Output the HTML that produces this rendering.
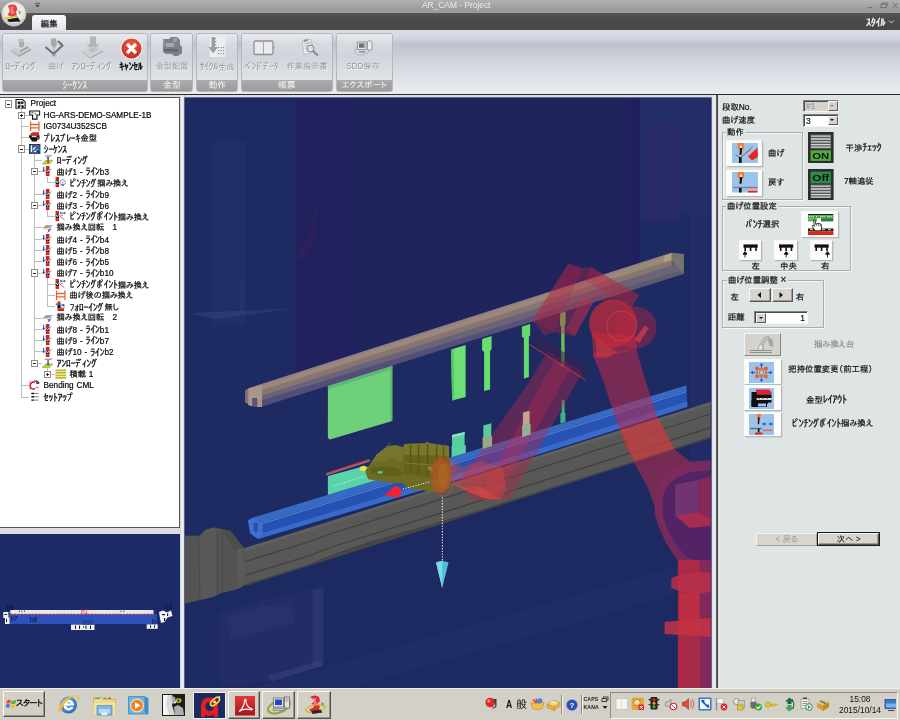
<!DOCTYPE html>
<html lang="ja">
<head>
<meta charset="utf-8">
<title>AR_CAM - Project</title>
<style>
html,body{margin:0;padding:0;}
body{width:900px;height:720px;overflow:hidden;position:relative;will-change:transform;background:#dcdee4;font-family:"Liberation Sans","IPAPGothic","IPAGothic",sans-serif;font-size:8.2px;color:#000;}
.abs{position:absolute;}
.hk{font-size:1.25em;letter-spacing:-0.05em;position:relative;top:.04em;margin-right:.04em;}
.dk{margin-left:-0.15em;margin-right:-0.1em;}
#titlebar{left:0;top:0;width:900px;height:14px;background:linear-gradient(#b2b2b4,#a2a2a2 45%,#9a9a9a 80%,#a0a0a0);}
#title{left:422px;top:0;width:68px;height:12px;line-height:11px;font-size:8.4px;color:#ececec;white-space:nowrap;text-align:center;}
#menubar{left:0;top:13px;width:900px;height:17.5px;background:linear-gradient(#555,#4b4b4b 30%,#484848);}
#ribbon{left:0;top:30px;width:900px;height:64px;background:linear-gradient(#dadce6 0px,#d6d8e2 6px,#cacdd8 11px,#bec2ce 13.500px,#c9cdd7 24px,#dadee4 42px,#e8ecec 62px);}
#ribline{left:0;top:93.700px;width:900px;height:1.700px;background:#2c2c2c;}
#midstrip{left:0;top:95.400px;width:900px;height:593.600px;background:#dcdce2;}
#gapL{left:180px;top:95px;width:5.400px;height:594px;background:linear-gradient(90deg,#cfcbd6,#e8e6ee 30%,#f2f2f6 55%,#c4c8d4 90%,#8890a8);}
#gapR{left:711px;top:95px;width:5px;height:594px;background:linear-gradient(90deg,#c8ccd8,#eaeaf0 40%,#e4e4ea);}
.grp{position:absolute;top:33px;height:58.5px;border:1px solid #b4b6bc;border-radius:2.5px;box-sizing:border-box;background:linear-gradient(rgba(235,237,240,.75),rgba(214,216,222,.55) 40%,rgba(226,228,232,.7));overflow:hidden;}
.grp .lab{position:absolute;left:0;right:0;bottom:0;height:10.5px;background:linear-gradient(#acacae,#9b9b9d);color:#f6f6f6;font-size:8.8px;line-height:10.5px;text-align:center;white-space:nowrap;}
.rb{position:absolute;color:#97979b;text-shadow:.5px .6px 0 rgba(255,255,255,.75);font-size:8.2px;white-space:nowrap;text-align:center;line-height:11px;}
/* tree */
#tree{left:0;top:97px;width:180px;height:431px;background:#fff;border-top:1px solid #555;border-right:1.2px solid #55555a;border-bottom:1.2px solid #555;box-sizing:border-box;overflow:hidden;}
.tr{-webkit-text-stroke:.22px #1a1a1a;position:absolute;left:0;height:11.27px;line-height:11.27px;white-space:nowrap;font-size:8.2px;color:#000;word-spacing:0.6px;}
.tr svg{position:absolute;top:0;}
.tl{position:absolute;background:#bcbcbc;}
.xb{position:absolute;width:5.4px;height:5.4px;border:0.8px solid #8e8e8e;background:#fff;}
.xb i{position:absolute;left:1px;top:2.3px;width:3.4px;height:.9px;background:#222;}
.xb b{position:absolute;left:2.25px;top:1px;width:.9px;height:3.4px;background:#222;}
</style>
</head>
<body>
<div id="titlebar" class="abs"></div>
<div id="title" class="abs">AR_CAM - Project</div>
<div id="menubar" class="abs"></div>
<div id="ribbon" class="abs"></div>
<div id="ribline" class="abs"></div>
<div id="midstrip" class="abs"></div>
<div id="gapL" class="abs"></div><div id="gapR" class="abs"></div>

<!-- orb -->
<svg class="abs" style="left:0;top:0" width="30" height="30" viewBox="0 0 30 30">
<defs><radialGradient id="og" cx="50%" cy="40%" r="60%"><stop offset="0" stop-color="#ffffff"/><stop offset="0.7" stop-color="#e6e6e2"/><stop offset="1" stop-color="#b8b8b4"/></radialGradient></defs>
<circle cx="13.8" cy="13.8" r="12.6" fill="#8c8c8c"/>
<circle cx="13.8" cy="13.8" r="12" fill="url(#og)" stroke="#d4d4d0" stroke-width="0.8"/>
<path d="M8 6 Q12 3.5 16 5.5 L17.5 9 L16 12 L17 15 L12 17 L7.5 15 L10 11 Z" fill="#e8282c" opacity=".9"/>
<path d="M10.5 7 L14 6.5 L13 10 L15 13 L11 14.5 Z" fill="#f4a0a0" opacity=".7"/>
<path d="M4.5 17.5 L17 15.5 L18 17 L4.5 19 Z" fill="#d8c428"/>
<path d="M7 19.5 L18 17.5 L20.5 21.5 L9 22 Z" fill="#181818"/>
<path d="M18 10 L21 12 L19.5 15 Z" fill="#38a860" opacity=".8"/>
</svg>
<!-- quick access chevron -->
<svg class="abs" style="left:33px;top:1px" width="9" height="8" viewBox="0 0 9 8"><path d="M2 2.2h5" stroke="#555" stroke-width="0.9"/><path d="M2 3.8h5L4.5 6.4z" fill="#4a4a4a"/></svg>
<!-- tab -->
<div class="abs" style="left:32px;top:14.6px;width:34px;height:16.4px;border-radius:3px 3px 0 0;background:linear-gradient(#fafafa,#eceef2 50%,#dfe1e8);"></div>
<div class="abs" style="left:32px;top:17.5px;width:34px;height:12px;line-height:12px;font-size:8.6px;font-weight:bold;color:#3a3a3a;text-align:center;">編集</div>
<div class="abs" style="left:866px;top:16px;width:20px;height:12px;line-height:12px;font-size:8.4px;color:#f0f0f0;white-space:nowrap;font-weight:bold;"><span class="hk">ｽﾀｲﾙ</span></div>
<svg class="abs" style="left:888px;top:19px" width="7" height="6" viewBox="0 0 7 6"><path d="M1 1.5L3.5 4L6 1.5" stroke="#d8d8d8" stroke-width="1" fill="none"/></svg>
<!-- window controls -->
<svg class="abs" style="left:864px;top:0" width="36" height="12" viewBox="0 0 36 12"><path d="M4.5 7.6h4" stroke="#6e6e6e" stroke-width="1"/><rect x="17" y="4.2" width="5.4" height="3.4" fill="none" stroke="#6e6e6e" stroke-width="1"/><path d="M18.5 4V2.8h5.2v3" fill="none" stroke="#6e6e6e" stroke-width=".8"/><path d="M29 3l4.6 4.8M33.6 3L29 7.8" stroke="#6e6e6e" stroke-width="1"/></svg>

<!-- group 1 -->
<div class="grp" style="left:1.6px;width:146.4px;"><div class="lab"><span class="hk">ｼｰｹﾝｽ</span></div></div>
<div class="grp" style="left:150.4px;width:43px;"><div class="lab">金型</div></div>
<div class="grp" style="left:196px;width:42.4px;"><div class="lab">動作</div></div>
<div class="grp" style="left:240.8px;width:91.8px;"><div class="lab">帳票</div></div>
<div class="grp" style="left:335.6px;width:57px;"><div class="lab">エクスポート</div></div>

<div class="rb" style="left:1px;top:60.5px;width:40px;"><span class="hk">ﾛｰﾃ<span class="dk">ﾞ</span>ｨﾝｸ<span class="dk">ﾞ</span></span></div>
<div class="rb" style="left:36px;top:60.5px;width:40px;">曲げ</div>
<div class="rb" style="left:67px;top:60.5px;width:50px;"><span class="hk">ｱﾝﾛｰﾃ<span class="dk">ﾞ</span>ｨﾝｸ<span class="dk">ﾞ</span></span></div>
<div class="rb" style="left:111px;top:60.5px;width:40px;color:#111;font-weight:bold;text-shadow:none;"><span class="hk">ｷｬﾝｾﾙ</span></div>
<div class="rb" style="left:151px;top:60.5px;width:42px;">金型配置</div>
<div class="rb" style="left:196px;top:60.5px;width:42px;"><span class="hk">ｻｲｸﾙ</span>生成</div>
<div class="rb" style="left:244.500px;top:60.5px;text-align:left;"><span class="hk">ﾍ<span class="dk">ﾞ</span>ﾝﾄ<span class="dk">ﾞ</span>ﾃ<span class="dk">ﾞ</span>ｰﾀ</span></div>
<div class="rb" style="left:286.500px;top:60.5px;text-align:left;">作業指示書</div>
<div class="rb" style="left:338px;top:60.5px;width:50px;">SDD保存</div>

<!-- icon: loading -->
<svg class="abs" style="left:10px;top:37px" width="23" height="22" viewBox="0 0 23 22">
<path d="M1 13 L13 7.5 L21 11.5 L9 18 Z" fill="#c9cacf"/><path d="M1 13 L9 18 V20 L1 15Z" fill="#b4b5ba"/><path d="M9 18 L21 11.5 V13.5 L9 20Z" fill="#a5a6ab"/>
<path d="M5 10.5 L13 6.5 L18 9 L10 13.5 Z" fill="#d5d6da"/><path d="M10 13.5 L18 9 V11 L10 15.5Z" fill="#9d9ea3"/>
<path d="M9 5 h5 v4 l-2.5 2 l-2.5 -2z" fill="#a9aaae"/><path d="M8 2 h6 v3 h-6z" fill="#c1c2c6"/>
</svg>
<!-- icon: bend -->
<svg class="abs" style="left:44px;top:37px" width="22" height="22" viewBox="0 0 22 22">
<path d="M7 1.5 h5 l1 6 l-3 4 l-3 -4z" fill="#a7a8ac"/><path d="M9 10 h1.4 v8 h-1.4z" fill="#b6b7bb"/>
<path d="M1.5 10 L9.6 17 L18.5 8.5 L14 4" stroke="#6e6f78" stroke-width="2" fill="none" stroke-linejoin="miter"/>
<path d="M7 17.5 h6 l-3 2.5z" fill="#a0a1a6"/>
</svg>
<!-- icon: unloading -->
<svg class="abs" style="left:82px;top:36px" width="22" height="23" viewBox="0 0 22 23">
<path d="M8 0.5 h6 v8 h3.5 l-6.5 6 l-6.5 -6 h3.5z" fill="#b3b4b9"/>
<path d="M0.5 15.5 L11 10.5 L21 14.5 L8 21.5 Z" fill="#cfd0d4"/><path d="M0.5 15.5 L8 21.5 V22.5 L0.5 16.8Z" fill="#b1b2b7"/><path d="M8 21.500 L21 14.5 V15.8 L8 22.8Z" fill="#a6a7ab"/>
<path d="M6 14 L11 11.5 L16 13.5 L10.5 16.5Z" fill="#bebfc4"/>
</svg>
<!-- icon: cancel -->
<svg class="abs" style="left:120px;top:36.500px" width="23" height="23" viewBox="0 0 23 23">
<defs><radialGradient id="cg" cx="50%" cy="30%" r="75%"><stop offset="0" stop-color="#ee5a44"/><stop offset="1" stop-color="#c42a20"/></radialGradient></defs>
<circle cx="11.5" cy="11.5" r="11" fill="#f4ecea"/><circle cx="11.5" cy="11.500" r="10" fill="url(#cg)"/>
<path d="M7 7 L16 16 M16 7 L7 16" stroke="#fff" stroke-width="3.2"/>
</svg>
<!-- icon: machine -->
<svg class="abs" style="left:161px;top:36px" width="23" height="22" viewBox="0 0 23 22">
<path d="M2 6 L4 3 h4 l2 -2 h6 l3 3 v5 l2 2 v6 l-4 3 h-4 l-2 -2 h-6 l-3 -2z" fill="#7d8088"/>
<path d="M5 7 h8 v4 h-8z" fill="#a5a8ae"/><path d="M3 13 h14 v2.500 h-14z" fill="#63666e"/><path d="M12 2 h4 v4 h-4z" fill="#9c9fa6"/><path d="M2 3 h2 v7 h-2z" fill="#8d9097"/>
</svg>
<!-- icon: cycle -->
<svg class="abs" style="left:207px;top:36px" width="20" height="22" viewBox="0 0 20 22">
<rect x="3" y="0.500" width="15.500" height="20.500" fill="#eceef0"/>
<path d="M4.500 1 h3.500 v10 h3 l-4.800 6.500 l-4.700 -6.500 h3z" fill="#9b9da3"/>
<g fill="#8b8d93"><rect x="8" y="2" width="1.200" height="1.200"/><rect x="8" y="5" width="1.200" height="1.200"/><rect x="8" y="8" width="1.200" height="1.200"/><rect x="11" y="11" width="1.200" height="1.200"/><rect x="13.500" y="11" width="1.200" height="1.200"/><rect x="16" y="11" width="1.200" height="1.200"/><rect x="11" y="14" width="1.200" height="1.200"/><rect x="13.500" y="14" width="1.200" height="1.200"/><rect x="16" y="14" width="1.200" height="1.200"/><rect x="11" y="17" width="1.200" height="1.200"/><rect x="13.500" y="17" width="1.200" height="1.200"/><rect x="16" y="17" width="1.200" height="1.200"/></g>
</svg>
<!-- icon: book -->
<svg class="abs" style="left:253px;top:39.500px" width="23" height="16" viewBox="0 0 23 16">
<rect x="1" y="1" width="19" height="13.500" rx="1.500" fill="#e9ebee" stroke="#8f9197" stroke-width="1.300"/><path d="M10.500 1.500v12.500" stroke="#a4a6ab" stroke-width="1"/><path d="M20 6.500h1.500v2h-1.500" fill="#8f9197"/>
</svg>
<!-- icon: document + magnifier -->
<svg class="abs" style="left:299px;top:37.500px" width="22" height="20" viewBox="0 0 22 20">
<path d="M3 3 L12 1 L15 14 L5 16.500Z" fill="#e4e6ea" stroke="#b3b5bb" stroke-width=".7"/><path d="M4.500 2 L8.500 1 L9 3 L5 4Z" fill="#8e9096"/>
<path d="M5.500 6 l7 -1.600 M6 8.500 l7 -1.600 M6.600 11 l7 -1.600" stroke="#a9abb0" stroke-width=".9"/>
<circle cx="11.500" cy="10.500" r="3.300" fill="#dfe3e8" stroke="#8e9096" stroke-width="1.100" fill-opacity=".7"/><path d="M14 13 L19 17.500" stroke="#85878d" stroke-width="2"/>
</svg>
<!-- icon: SDD -->
<svg class="abs" style="left:354px;top:39px" width="20" height="18" viewBox="0 0 20 18">
<ellipse cx="9" cy="10" rx="8.500" ry="5.500" fill="none" stroke="#b8bac0" stroke-width="1.200" transform="rotate(-25 9 10)"/>
<rect x="3.500" y="3" width="8.500" height="7.500" fill="#e6e8ec" stroke="#8c8e94" stroke-width=".9"/><rect x="5" y="4.300" width="5.500" height="4.500" fill="#70727a"/>
<path d="M5 12 h6 v1.500 h-6z" fill="#8c8e94"/>
<rect x="13.500" y="2" width="4.500" height="9" rx=".8" fill="#eceef0" stroke="#8c8e94" stroke-width=".9"/>
</svg>

<!--TREE-->

<svg width="0" height="0" style="position:absolute">
<defs>
<symbol id="i-proj" viewBox="0 0 12 11"><path d="M1 .6h7l2.600 2.400v7.500H1z" fill="#fff" stroke="#111" stroke-width="1.100"/><path d="M3 3h2.500v2H3zM6.500 3h2v2h-2zM5 5v2M3.500 7h5M3 7.200h2v2H3zM7 7.200h2v2H7z" fill="#111" stroke="#111" stroke-width=".5"/></symbol>
<symbol id="i-part" viewBox="0 0 12 11"><path d="M.8 1h10.400v4.200H8.300V9.600H3.700V5.200H.8z" fill="#fff" stroke="#111" stroke-width="1.200"/><path d="M2.500 2.800h2M6 2.800l1 2" stroke="#111" stroke-width=".8"/></symbol>
<symbol id="i-hbar" viewBox="0 0 12 11"><path d="M1.600 .5v10M10.400 .5v10" stroke="#e0642c" stroke-width="1.300"/><path d="M1.600 3.600h8.800M1.600 7.200h8.800" stroke="#e0642c" stroke-width="1.500"/></symbol>
<symbol id="i-press" viewBox="0 0 12 11"><path d="M2 1.200l2-1h6.500v3H1z" fill="#e8201c"/><path d="M0 3.400h11v2.600H0z" fill="#111"/><path d="M3 4h5v1.300H3z" fill="#d8d8d8"/><path d="M1 6h10v1.600H9l-1 2.400H3L2 7.600H1z" fill="#111"/><path d="M8.500 6h2v2h-2z" fill="#e8201c"/></symbol>
<symbol id="i-seq" viewBox="0 0 12 11"><rect x=".3" y=".3" width="11.400" height="10.400" fill="#1c6cb0" stroke="#111" stroke-width=".8"/><path d="M2.500 1.500v7M4 6l4-4M4.500 9l5-3" stroke="#fff" stroke-width="1.200"/><path d="M6 1.500h3v2H6zM3 8.500h3v1.500H3z" fill="#e02820"/><path d="M8 6.500l2.500 2.500" stroke="#111" stroke-width="1.200"/></symbol>
<symbol id="i-load" viewBox="0 0 12 11"><path d="M2.500 1.600L4 .3h7.200L9.600 1.600z" fill="#9a9a9a"/><path d="M.3 9.500L3.600 5.500h7.800L8 9.500z" fill="#c8d020" stroke="#8a9010" stroke-width=".5"/><path d="M5.600 1.800h1.500v5.500H5.600z" fill="#2858c8"/><path d="M4.500 3.500L6.350 1.500 8.200 3.500z" fill="#2858c8"/><path d="M5.400 7h2v1.400h-2z" fill="#e02820"/></symbol>
<symbol id="i-unload" viewBox="0 0 12 11"><path d="M2 2L3.600 .4h7.800L9.800 2z" fill="#a0a0a0"/><path d="M.3 10L3.600 6.200h7.800L8 10z" fill="#c8d020" stroke="#8a9010" stroke-width=".5"/><path d="M5.600 2h1.500v5H5.600z" fill="#2858c8"/><path d="M4.500 6L6.350 8 8.200 6z" fill="#2858c8"/></symbol>
<symbol id="i-bend" viewBox="0 0 12 11"><path d="M1.700 .8v5" stroke="#2050c8" stroke-width="1.100"/><path d="M.2 4.200L1.700 6.600 3.200 4.200z" fill="#2050c8"/><path d="M4 0h3.800v3.600H4z" fill="#e8181c"/><path d="M4 3.600h3.800v4H4z" fill="#111"/><path d="M4 7.600h3.800v3.200H4z" fill="#e8181c"/><path d="M4.600 4.200l1.300 2.200 1.300-2.200" stroke="#fff" stroke-width=".9" fill="none"/><path d="M5.900 6.400L10 2.600" stroke="#8a8a8a" stroke-width=".9"/><path d="M2.400 3.200L5.900 6.400" stroke="#8a8a8a" stroke-width=".7"/></symbol>
<symbol id="i-pinch" viewBox="0 0 12 11"><path d="M.6 0h3.600v3.400H.6z" fill="#e8181c"/><path d="M.6 3.400h3.600v4.200H.6z" fill="#111"/><path d="M.6 7.600h3.600v3.200H.6z" fill="#e8181c"/><path d="M1.100 4l1.300 2.200L3.700 4" stroke="#fff" stroke-width=".9" fill="none"/><circle cx="8" cy="5.600" r="3" fill="#e8eef8" stroke="#88a4d8" stroke-width="1"/><path d="M6 8.500l3.500 .8-1-2z" fill="#2848b8"/><path d="M7 4.500l2 2" stroke="#e07070" stroke-width=".8"/></symbol>
<symbol id="i-pinpt" viewBox="0 0 12 11"><path d="M.6 0h3.600v3.400H.6z" fill="#e8181c"/><path d="M.6 3.400h3.600v4.200H.6z" fill="#111"/><path d="M.6 7.600h3.600v3.200H.6z" fill="#e8181c"/><path d="M1.100 4l1.300 2.200L3.700 4" stroke="#fff" stroke-width=".9" fill="none"/><path d="M5.200 2.200h5.600" stroke="#2858d0" stroke-width="1"/><path d="M5 2.200l1.600-1.400v2.800zM11.200 2.200L9.600 .8v2.800z" fill="#2858d0"/><path d="M4.600 5l5.400 4.400" stroke="#d86060" stroke-width="1"/><path d="M5 4.400l3.500 .3" stroke="#8a8a8a" stroke-width=".8"/></symbol>
<symbol id="i-follow" viewBox="0 0 12 11"><path d="M2.600 .6h3.200v3H2.600z" fill="#e8181c"/><path d="M2.600 3.600h3.200v4H2.600z" fill="#111"/><path d="M2.600 7.600h6.800v3H2.600z" fill="#e8181c"/><path d="M.4 3.400l2-1.600v3.200z" fill="#2858d0"/><path d="M6 4.600c2-1.500 3.800.5 3.500 3" stroke="#68a8c8" stroke-width="1.300" fill="none"/><path d="M7.800 2.600l3 1.800-3 .8z" fill="#2050c0"/><path d="M6.200 5.500l1.200 2" stroke="#40a060" stroke-width="1"/></symbol>
<symbol id="i-rot" viewBox="0 0 12 11"><path d="M.2 5.600L4.200 2h7.400L7.500 5.600z" fill="#a8a8a8"/><path d="M1.500 6.200l4-3.200M4 6.200l4-3.200" stroke="#e08050" stroke-width=".7"/><path d="M5.500 6.400l3.400 .4-1 2.400z" fill="#2858d0"/><path d="M6 9.800l2.500-2.800" stroke="#2858d0" stroke-width="1"/><path d="M9.500 4.500l-1.200 3" stroke="#6080d0" stroke-width=".9"/></symbol>
<symbol id="i-stack" viewBox="0 0 12 11"><path d="M.5 .6h11v1.900H.5zM.5 3.200h11v1.900H.5zM.5 5.800h11v1.900H.5zM.5 8.400h11v1.900H.5z" fill="#c0b828"/><path d="M.5 2.500h11v.7H.5zM.5 5.100h11v.7H.5zM.5 7.700h11v.7H.5z" fill="#e8e4a8"/></symbol>
<symbol id="i-cml" viewBox="0 0 12 11"><path d="M4.500 .6h4l2.700 2.500-1.700 1.200-1.800-.3-.5-2z" fill="#222"/><path d="M6 1.800l3 .6" stroke="#ddd" stroke-width=".6"/><path d="M6.200 2.600C3.500 1.400 1.200 3 1.300 6c.1 3 2.500 4.200 5 3" stroke="#d8181c" stroke-width="1.500" fill="none"/><path d="M1 .8v9.600" stroke="#c03030" stroke-width=".6"/><path d="M7 8.600l1-1.400 1 1.400 1-1.400" stroke="#d8181c" stroke-width=".7" fill="none"/></symbol>
<symbol id="i-setup" viewBox="0 0 12 11"><path d="M3 1.500h2M3 5h2M3 8.500h2" stroke="#111" stroke-width="1.500" stroke-linecap="round"/><path d="M6 1.500h4M6 5h4.500M6 8.500h4" stroke="#444" stroke-width=".7"/></symbol>
</defs></svg>

<div id="tree" class="abs">
<div class="tl" style="left:24.4px;top:16.7px;width:4.4px;height:.7px"></div>
<div class="tl" style="left:21.0px;top:28.0px;width:7.8px;height:.7px"></div>
<div class="tl" style="left:21.0px;top:39.3px;width:7.8px;height:.7px"></div>
<div class="tl" style="left:24.4px;top:50.5px;width:4.4px;height:.7px"></div>
<div class="tl" style="left:34.0px;top:61.8px;width:7.8px;height:.7px"></div>
<div class="tl" style="left:37.4px;top:73.1px;width:4.4px;height:.7px"></div>
<div class="tl" style="left:47.0px;top:84.3px;width:7.8px;height:.7px"></div>
<div class="tl" style="left:34.0px;top:95.6px;width:7.8px;height:.7px"></div>
<div class="tl" style="left:37.4px;top:106.9px;width:4.4px;height:.7px"></div>
<div class="tl" style="left:47.0px;top:118.1px;width:7.8px;height:.7px"></div>
<div class="tl" style="left:34.0px;top:129.4px;width:7.8px;height:.7px"></div>
<div class="tl" style="left:34.0px;top:140.7px;width:7.8px;height:.7px"></div>
<div class="tl" style="left:34.0px;top:152.0px;width:7.8px;height:.7px"></div>
<div class="tl" style="left:34.0px;top:163.2px;width:7.8px;height:.7px"></div>
<div class="tl" style="left:37.4px;top:174.5px;width:4.4px;height:.7px"></div>
<div class="tl" style="left:47.0px;top:185.8px;width:7.8px;height:.7px"></div>
<div class="tl" style="left:47.0px;top:197.0px;width:7.8px;height:.7px"></div>
<div class="tl" style="left:47.0px;top:208.3px;width:7.8px;height:.7px"></div>
<div class="tl" style="left:34.0px;top:219.6px;width:7.8px;height:.7px"></div>
<div class="tl" style="left:34.0px;top:230.8px;width:7.8px;height:.7px"></div>
<div class="tl" style="left:34.0px;top:242.1px;width:7.8px;height:.7px"></div>
<div class="tl" style="left:34.0px;top:253.4px;width:7.8px;height:.7px"></div>
<div class="tl" style="left:37.4px;top:264.7px;width:4.4px;height:.7px"></div>
<div class="tl" style="left:50.4px;top:275.9px;width:4.4px;height:.7px"></div>
<div class="tl" style="left:21.0px;top:287.2px;width:7.8px;height:.7px"></div>
<div class="tl" style="left:21.0px;top:298.5px;width:7.8px;height:.7px"></div>
<div class="tl" style="left:20.6px;top:11.0px;width:.7px;height:287.8px"></div>
<div class="tl" style="left:33.6px;top:56.1px;width:.7px;height:208.9px"></div>
<div class="tl" style="left:46.6px;top:78.6px;width:.7px;height:6.1px"></div>
<div class="tl" style="left:46.6px;top:112.4px;width:.7px;height:6.1px"></div>
<div class="tl" style="left:46.6px;top:180.0px;width:.7px;height:28.6px"></div>
<div class="tl" style="left:46.6px;top:270.2px;width:.7px;height:6.1px"></div>
<div class="xb" style="left:4.5px;top:2.3px"><i></i></div>
<div class="tr" style="top:0.16px;left:0"><svg style="left:15.0px;top:0.4px" width="11.500" height="10.500"><use href="#i-proj"/></svg><span style="position:absolute;left:30.6px;top:0.2px">Project</span></div>
<div class="xb" style="left:17.5px;top:13.6px"><i></i><b></b></div>
<div class="tr" style="top:11.43px;left:0"><svg style="left:29.3px;top:0.4px" width="11.500" height="10.500"><use href="#i-part"/></svg><span style="position:absolute;left:43.6px;top:0.2px">HG-ARS-DEMO-SAMPLE-1B</span></div>
<div class="tr" style="top:22.70px;left:0"><svg style="left:29.3px;top:0.4px" width="11.500" height="10.500"><use href="#i-hbar"/></svg><span style="position:absolute;left:43.6px;top:0.2px">IG0734U352SCB</span></div>
<div class="tr" style="top:33.98px;left:0"><svg style="left:29.3px;top:0.4px" width="11.500" height="10.500"><use href="#i-press"/></svg><span style="position:absolute;left:43.6px;top:0.2px"><span class="hk">ﾌ<span class="dk">ﾟ</span>ﾚｽﾌ<span class="dk">ﾞ</span>ﾚｰｷ</span>金型</span></div>
<div class="xb" style="left:17.5px;top:47.4px"><i></i></div>
<div class="tr" style="top:45.24px;left:0"><svg style="left:29.3px;top:0.4px" width="11.500" height="10.500"><use href="#i-seq"/></svg><span style="position:absolute;left:43.6px;top:0.2px"><span class="hk">ｼｰｹﾝｽ</span></span></div>
<div class="tr" style="top:56.51px;left:0"><svg style="left:42.3px;top:0.4px" width="11.500" height="10.500"><use href="#i-load"/></svg><span style="position:absolute;left:56.6px;top:0.2px"><span class="hk">ﾛｰﾃ<span class="dk">ﾞ</span>ｨﾝｸ<span class="dk">ﾞ</span></span></span></div>
<div class="xb" style="left:30.5px;top:69.9px"><i></i></div>
<div class="tr" style="top:67.78px;left:0"><svg style="left:42.3px;top:0.4px" width="11.500" height="10.500"><use href="#i-bend"/></svg><span style="position:absolute;left:56.6px;top:0.2px">曲げ1 - <span class="hk">ﾗｲﾝ</span>b3</span></div>
<div class="tr" style="top:79.05px;left:0"><svg style="left:55.3px;top:0.4px" width="11.500" height="10.500"><use href="#i-pinch"/></svg><span style="position:absolute;left:69.6px;top:0.2px"><span class="hk">ﾋ<span class="dk">ﾟ</span>ﾝﾁﾝｸ<span class="dk">ﾞ</span></span>掴み換え</span></div>
<div class="tr" style="top:90.32px;left:0"><svg style="left:42.3px;top:0.4px" width="11.500" height="10.500"><use href="#i-bend"/></svg><span style="position:absolute;left:56.6px;top:0.2px">曲げ2 - <span class="hk">ﾗｲﾝ</span>b9</span></div>
<div class="xb" style="left:30.5px;top:103.7px"><i></i></div>
<div class="tr" style="top:101.59px;left:0"><svg style="left:42.3px;top:0.4px" width="11.500" height="10.500"><use href="#i-bend"/></svg><span style="position:absolute;left:56.6px;top:0.2px">曲げ3 - <span class="hk">ﾗｲﾝ</span>b6</span></div>
<div class="tr" style="top:112.86px;left:0"><svg style="left:55.3px;top:0.4px" width="11.500" height="10.500"><use href="#i-pinpt"/></svg><span style="position:absolute;left:69.6px;top:0.2px"><span class="hk">ﾋ<span class="dk">ﾟ</span>ﾝﾁﾝｸ<span class="dk">ﾞ</span>ﾎ<span class="dk">ﾟ</span>ｲﾝﾄ</span>掴み換え</span></div>
<div class="tr" style="top:124.13px;left:0"><svg style="left:42.3px;top:0.4px" width="11.500" height="10.500"><use href="#i-rot"/></svg><span style="position:absolute;left:56.6px;top:0.2px">掴み換え回転　1</span></div>
<div class="tr" style="top:135.41px;left:0"><svg style="left:42.3px;top:0.4px" width="11.500" height="10.500"><use href="#i-bend"/></svg><span style="position:absolute;left:56.6px;top:0.2px">曲げ4 - <span class="hk">ﾗｲﾝ</span>b4</span></div>
<div class="tr" style="top:146.68px;left:0"><svg style="left:42.3px;top:0.4px" width="11.500" height="10.500"><use href="#i-bend"/></svg><span style="position:absolute;left:56.6px;top:0.2px">曲げ5 - <span class="hk">ﾗｲﾝ</span>b8</span></div>
<div class="tr" style="top:157.94px;left:0"><svg style="left:42.3px;top:0.4px" width="11.500" height="10.500"><use href="#i-bend"/></svg><span style="position:absolute;left:56.6px;top:0.2px">曲げ6 - <span class="hk">ﾗｲﾝ</span>b5</span></div>
<div class="xb" style="left:30.5px;top:171.3px"><i></i></div>
<div class="tr" style="top:169.21px;left:0"><svg style="left:42.3px;top:0.4px" width="11.500" height="10.500"><use href="#i-bend"/></svg><span style="position:absolute;left:56.6px;top:0.2px">曲げ7 - <span class="hk">ﾗｲﾝ</span>b10</span></div>
<div class="tr" style="top:180.49px;left:0"><svg style="left:55.3px;top:0.4px" width="11.500" height="10.500"><use href="#i-pinpt"/></svg><span style="position:absolute;left:69.6px;top:0.2px"><span class="hk">ﾋ<span class="dk">ﾟ</span>ﾝﾁﾝｸ<span class="dk">ﾞ</span>ﾎ<span class="dk">ﾟ</span>ｲﾝﾄ</span>掴み換え</span></div>
<div class="tr" style="top:191.75px;left:0"><svg style="left:55.3px;top:0.4px" width="11.500" height="10.500"><use href="#i-hbar"/></svg><span style="position:absolute;left:69.6px;top:0.2px">曲げ後の掴み換え</span></div>
<div class="tr" style="top:203.02px;left:0"><svg style="left:55.3px;top:0.4px" width="11.500" height="10.500"><use href="#i-follow"/></svg><span style="position:absolute;left:69.6px;top:0.2px"><span class="hk">ﾌｫﾛｰｲﾝｸ<span class="dk">ﾞ</span></span>無し</span></div>
<div class="tr" style="top:214.30px;left:0"><svg style="left:42.3px;top:0.4px" width="11.500" height="10.500"><use href="#i-rot"/></svg><span style="position:absolute;left:56.6px;top:0.2px">掴み換え回転　2</span></div>
<div class="tr" style="top:225.56px;left:0"><svg style="left:42.3px;top:0.4px" width="11.500" height="10.500"><use href="#i-bend"/></svg><span style="position:absolute;left:56.6px;top:0.2px">曲げ8 - <span class="hk">ﾗｲﾝ</span>b1</span></div>
<div class="tr" style="top:236.83px;left:0"><svg style="left:42.3px;top:0.4px" width="11.500" height="10.500"><use href="#i-bend"/></svg><span style="position:absolute;left:56.6px;top:0.2px">曲げ9 - <span class="hk">ﾗｲﾝ</span>b7</span></div>
<div class="tr" style="top:248.11px;left:0"><svg style="left:42.3px;top:0.4px" width="11.500" height="10.500"><use href="#i-bend"/></svg><span style="position:absolute;left:56.6px;top:0.2px">曲げ10 - <span class="hk">ﾗｲﾝ</span>b2</span></div>
<div class="xb" style="left:30.5px;top:261.5px"><i></i></div>
<div class="tr" style="top:259.38px;left:0"><svg style="left:42.3px;top:0.4px" width="11.500" height="10.500"><use href="#i-unload"/></svg><span style="position:absolute;left:56.6px;top:0.2px"><span class="hk">ｱﾝﾛｰﾃ<span class="dk">ﾞ</span>ｨﾝｸ<span class="dk">ﾞ</span></span></span></div>
<div class="xb" style="left:43.5px;top:272.8px"><i></i><b></b></div>
<div class="tr" style="top:270.65px;left:0"><svg style="left:55.3px;top:0.4px" width="11.500" height="10.500"><use href="#i-stack"/></svg><span style="position:absolute;left:69.6px;top:0.2px">積載 1</span></div>
<div class="tr" style="top:281.92px;left:0"><svg style="left:29.3px;top:0.4px" width="11.500" height="10.500"><use href="#i-cml"/></svg><span style="position:absolute;left:43.6px;top:0.2px">Bending CML</span></div>
<div class="tr" style="top:293.19px;left:0"><svg style="left:29.3px;top:0.4px" width="11.500" height="10.500"><use href="#i-setup"/></svg><span style="position:absolute;left:43.6px;top:0.2px"><span class="hk">ｾｯﾄｱｯﾌ<span class="dk">ﾟ</span></span></span></div>
</div>

<!--PREVIEW-->
<div class="abs" id="preview" style="left:0;top:534px;width:179.800px;height:154.300px;background:#1c2b67;overflow:hidden;">
<svg width="180" height="155" viewBox="0 534 180 155" style="position:absolute;left:0;top:0;font-family:'Liberation Sans',sans-serif">
<rect x="8" y="614" width="148.700" height="10" fill="#2d51ba"/>
<rect x="10.500" y="610" width="143" height="4.200" fill="#e9e9ec"/>
<path d="M10.500 614.200H153.500" stroke="#e02020" stroke-width="1" stroke-dasharray="2.200 1.300"/>
<g fill="#f2f2f2"><rect x="71" y="624.600" width="23.500" height="5.400"/><rect x="146.700" y="624.400" width="11" height="4.400"/><rect x="3.300" y="612" width="5" height="6"/><rect x="5" y="617.500" width="4.500" height="6.500"/><path d="M159 612l4-1.500 4 2 4-2 1.500 5.500-5 1.500-3 4.500-3.500 1-1-4.500z"/><path d="M8.500 612.500l6-2.800v2.800z"/></g>
<g fill="#10163c"><rect x="75" y="625.500" width="1" height="3.500"/><rect x="79" y="625.500" width="1" height="3.500"/><rect x="83" y="626.500" width="1.200" height="1.200"/><rect x="85.500" y="625.500" width="1" height="3.500"/><rect x="90" y="625.500" width="1" height="3.500"/><rect x="150" y="625.300" width="1" height="2.500"/><rect x="154" y="625.300" width="1" height="2.500"/><rect x="4.500" y="614" width="2.500" height="1"/><rect x="6" y="619" width="1" height="3"/><rect x="162" y="614" width="3" height="1.200"/><rect x="164" y="618" width="1.200" height="3"/><rect x="167" y="613.500" width="1.200" height="2.500"/><rect x="19" y="610.700" width="1" height="1"/><rect x="21.500" y="610.700" width="1" height="1"/><rect x="24" y="610.700" width="1" height="1"/><rect x="120.500" y="610.700" width="1" height="1"/><rect x="123.500" y="610.700" width="1" height="1"/></g>
<g font-size="6.500" fill="#090d2a"><text x="6.500" y="609.500">b3</text><text x="10.500" y="621">b7</text><text x="30" y="621.500">b6</text><text x="82.500" y="625" fill="#15306e">b50</text><text x="165" y="609" >b3</text><text x="152" y="624">b</text></g>
<text x="81" y="614.200" font-size="6.500" fill="#e03030">b1</text>
</svg>
</div>

<!--VIEWPORT-->
<div class="abs" id="viewport" style="left:185.400px;top:98px;width:525.600px;height:590.300px;background:#1e2a62;overflow:hidden;box-shadow:0 0 0 .6px #17205a;">
<svg width="525.600" height="590.300" viewBox="185.400 98 525.600 590.300" style="position:absolute;left:0;top:0">
<defs>
<linearGradient id="bgv" x1="0" y1="0" x2="1" y2="0"><stop offset="0" stop-color="#1e2a63"/><stop offset=".205" stop-color="#1e2962"/><stop offset=".215" stop-color="#21215e"/><stop offset=".32" stop-color="#21215e"/><stop offset=".33" stop-color="#20245e"/><stop offset=".85" stop-color="#20255e"/><stop offset="1" stop-color="#1f2862"/></linearGradient>
<linearGradient id="bgv2" x1="0" y1="0" x2="0" y2="1"><stop offset="0" stop-color="#1e2860" stop-opacity="0"/><stop offset=".45" stop-color="#1e2860" stop-opacity="0"/><stop offset=".5" stop-color="#1d285e" stop-opacity=".9"/><stop offset="1" stop-color="#1f2a62" stop-opacity=".9"/></linearGradient>
</defs>
<rect x="185" y="98" width="527" height="591" fill="#1e2a62"/>
<path d="M297 98H640V262L297 373Z" fill="#20245d"/>
<path d="M297 98H356V354L297 373Z" fill="#221f5e" opacity=".5"/>
<path d="M185 600L711 440V689H185Z" fill="#1d2962" opacity=".8"/>
<!-- faint background structures -->
<g id="faint">
<path d="M212.500 141.600h34v184h-34z" fill="#26326c" opacity=".55"/>
<path d="M189 313l104-4.500-78 11z" fill="#38447e" opacity=".5"/>
<path d="M241.500 283h1.500v30h-1.500z" fill="#34407a" opacity=".6"/>
<path d="M640 98H711V214H681V222.500H640Z" fill="#262f6b" opacity=".75"/><path d="M648 124H681V222.500H648Z" fill="#2d2968" opacity=".55"/><path d="M690 214H711V689H690Z" fill="#26306c" opacity=".5"/><path d="M626 98H640V262L626 266.500Z" fill="#241e5b" opacity=".6"/>
<path d="M298 250q14-8 16-42l3 0q0 44-19 54z" fill="#4a1f5a" opacity=".3"/>
<path d="M220 612L262 600L300 592L324 588V666L270 681L220 688Z" fill="#28326e" opacity=".5"/>
<path d="M313 589L324 587V666L313 669Z" fill="#323c78" opacity=".5"/><path d="M268 676L322 660V666L272 682Z" fill="#3a4480" opacity=".5"/><path d="M226 618L262 606L290 604L296 622L232 640Z" fill="#2f3973" opacity=".45"/>
<path d="M250 689L711 556V584L348 689Z" fill="#26336f" opacity=".4"/>
</g>
<!--SCENE-->
<!-- upper beam -->
<g id="beam">
<defs>
<linearGradient id="bmTop" x1="248" y1="0" x2="684" y2="0" gradientUnits="userSpaceOnUse"><stop offset="0" stop-color="#9c887c"/><stop offset=".6" stop-color="#9a887c"/><stop offset="1" stop-color="#988c74"/></linearGradient>
<linearGradient id="bmFr" x1="248" y1="0" x2="684" y2="0" gradientUnits="userSpaceOnUse"><stop offset="0" stop-color="#524c79"/><stop offset=".5" stop-color="#565078"/><stop offset="1" stop-color="#5e5d6c"/></linearGradient>
</defs>
<path d="M262.500 389L672 259.500L684 262L684 274L262.500 406.500Z" fill="url(#bmFr)"/>
<path d="M262.500 395L672 265L684 266.500L684 269.500L262.500 400Z" fill="#6a6479"/>
<path d="M262.500 389.500L672 260L672 265.500L262.500 395.500Z" fill="#8a7870" opacity=".95"/>
<path d="M248.500 388.500L672 252.800L672 260.200L262.500 390Z" fill="url(#bmTop)"/>
<path d="M248.500 388.500L672 252.800L672 254.300L250 389.800Z" fill="#927e82"/>
<path d="M672 252.800L684.400 254L684 274L672 260Z" fill="#77736f"/>
<path d="M664 256L672 253.300L672 260L664 262.600Z" fill="#aaa084"/>
<!-- left end face -->
<path d="M245.500 390.500L248.500 388.500L248.500 404L245.500 402.500Z" fill="#7d7088"/>
<path d="M248.500 388.500L262.500 385.300L262.500 407L257.500 407L257.500 398L253 398.300L253 406.500L248.500 405Z" fill="#a89786"/>
<path d="M253 398.300L257.500 398L257.500 407L253 406.500Z" fill="#5a5478"/>
</g>
<!-- green plate and punches -->
<g id="punches">
<path d="M328.300 386L392.700 365.700L392.700 420.500L391 421.600L330.300 439.400L328.300 438Z" fill="#6ed078"/>
<path d="M328.300 386L392.700 365.700L392.700 369L328.300 389.500Z" fill="#5cae78" opacity=".8"/>
<path d="M391 366.300L392.700 365.700L392.700 420.500L391 421.600Z" fill="#58b868"/>
<path d="M451.500 349.500L466 345L466 397L452.500 400.500Z" fill="#6ce074"/>
<path d="M451.500 349.500L454 348.800L454.500 400L452.500 400.500Z" fill="#56c466"/>
<path d="M482.500 339L492 336L492 349L490.500 351L490.500 389.500L484.500 391L484.500 352L482.500 350Z" fill="#66de70"/>
<path d="M522.300 326.500L530.600 324L530.600 335L529.300 337L529.300 377L524.300 378.500L524.300 338L522.300 336.500Z" fill="#62da6c"/>
<path d="M560.400 313L566 311.500L566 324L565 325.500L565 365.500L561.600 366.500L561.600 326.500L560.400 325Z" fill="#6cbc58"/>
</g>
<!-- grey bed -->
<g id="bed">
<path d="M185.400 535.700L203 535.700L206.500 529.400L214.900 527.400L230.800 530.800L244.700 548.200L246 584.300L237.800 589.200L221 593.300L214 596.800L187.800 603L185.400 603.500Z" fill="#545452"/>
<path d="M222.500 529L230.800 530.800L244.700 548.200L246 584.300L237.800 589.200L236.500 553L226 537Z" fill="#4d4d4b"/>
<path d="M237 549L244.700 548.200L246 584.300L237.800 589.200Z" fill="#5a5a58"/>
<path d="M198.900 536.500L206.500 529.400L214.900 527.400L217.600 531L217.600 595L214 596.800L200.500 600Z" fill="#585856"/>
<path d="M198.900 536.500L200.500 600M217.600 531L217.600 595M222.500 529L222.500 593" stroke="#474745" stroke-width=".9" fill="none"/>
<path d="M244.700 548.200L335 520L450 484L570 446L711 402L711 436.700L590 475.800L470 513.500L370 542L335 554L305 566.300L246 584.300Z" fill="#585856"/>
<path d="M244.700 548.200L711 402L711 405L335 523L245 551.500Z" fill="#60605e"/>
<path d="M245.500 561.500L305 543.300L335 532.500L470 490.200L711 414" stroke="#3f3f3f" stroke-width="1.200" fill="none"/>
<path d="M246 575.300L305 557.200L335 546L470 504.200L711 427.600" stroke="#3f3f3f" stroke-width="1.200" fill="none"/>
<path d="M246 584.300L305 566.300L335 554L370 542L470 513.500L590 475.800L711 436.700L711 438.300L470 515.300L246 586Z" fill="#464646"/>
</g>
<!-- lower dies (behind rail partially) -->
<g id="dies">
<path d="M328.300 476L365 466L392 474L392 484L328.300 497Z" fill="#5ad2aa"/>
<path d="M334 486L365 476" stroke="#e8f4ee" stroke-width=".8" stroke-dasharray="1 1.200"/>
<path d="M326.500 474.500L370 460.500" stroke="#7a7a86" stroke-width="2.200"/>
<path d="M327.500 473.300L370 459.600" stroke="#ea3434" stroke-width="1.400"/>
<path d="M452.500 435L465 432L465 445L466.200 445.500L466.200 456L452 460L452 446L452.500 445.500Z" fill="#56d2a0"/>
<path d="M452.500 435L465 432L465 434.500L452.500 437.500Z" fill="#8ee6c0"/>
<path d="M562 400.500L565 400L565 412.500L565.800 413L565.800 422L560.800 423.500L560.800 413.500L562 412.500Z" fill="#46ae86"/>
</g>
<!-- blue rail -->
<g id="rail">
<defs><linearGradient id="rl" x1="250" y1="0" x2="688" y2="0" gradientUnits="userSpaceOnUse"><stop offset="0" stop-color="#2551b2"/><stop offset="1" stop-color="#2753b5"/></linearGradient></defs>
<path d="M251.700 518.300L686.700 385.600L687.800 406.700L570 444.400L450 482L258.300 539Z" fill="url(#rl)"/>
<path d="M251.700 518.300L686.700 385.600L686.900 390.600L263 522.500Z" fill="#386ac4"/>
<path d="M263 523.500L686.900 391.600" stroke="#6a96dc" stroke-width=".9" opacity=".8"/>
<path d="M263 533L450 476.500L570 439L687.600 401.500L687.800 406.700L570 444.400L450 482L258.300 539Z" fill="#386acc"/>
<path d="M248.300 520.500L251.700 518.300L263 522.500L263 534L258.300 539L250.500 533.500Z" fill="#3d72d0"/>
<path d="M254 523L258 522.500L258 531L256 533L254 530Z" fill="#2750a8"/>
</g>
<!-- olive gripper -->
<g id="gripper">
<path d="M366 470L376.700 455.300L388.700 446L396.700 445.300L403.300 447.300L404.700 444L426 443.300L427.300 441.300L430 443.300L449.300 446L450 462L452 470L450 488L436 492L430 491.300L408.700 488.700L403.300 483.300L390 482.700L368.700 479.300L366 472.700Z" fill="#6e6b24"/>
<path d="M376.700 455.300L388.700 446L396.700 445.300L403.300 447.300L403 462L392 458L384 461L372 462Z" fill="#77742b"/>
<path d="M404.700 444L426 443.300L430 443.300L449.300 446L449.500 456L404.500 455Z" fill="#7a772c"/>
<path d="M404.500 455L449.500 456L450 481L404 474Z" fill="#66631f"/>
<path d="M411 445v28M419 444.500v30M428 444v32M437 445v33M444 446v34" stroke="#55531a" stroke-width="1.300"/>
<path d="M404 463L449 466" stroke="#7d7a30" stroke-width="1.200"/>
<path d="M370 468l16-2 14 3 4 6-14 1-18-2z" fill="#615f1e"/>
<path d="M376.700 455.300L391 443" stroke="#9aa0a0" stroke-width=".8" stroke-dasharray="1.500 1"/>
<path d="M360 467l4.500-1.500 3 2.800-2.500 3-4.500-.8z" fill="#e6e23c"/>
<path d="M378 471.500l5-.5 0 2.300-5 .5z" fill="#58caa0"/>
<path d="M428 466l5 1 0 4-5-1z" fill="#8a8632"/>
</g>
<!-- red cone + dotted guide -->
<path d="M384.700 495.300L395.300 486Q401.500 486.500 402 490.500Q401.500 496 398 497.500Z" fill="#f02430"/>
<path d="M403.300 489L431 481.700" stroke="#f0f0e8" stroke-width="1" stroke-dasharray="1.200 1.400"/>
<!-- robot -->
<g id="robot">
<!-- forearm -->
<path d="M548 351L583 372L510 500L470 500L462 478L531 380Z" fill="#b82648" opacity=".4"/>
<path d="M556 358L572 367.500L496 500L478 500Z" fill="#d02c48" opacity=".28"/>
<path d="M531.700 331.300L590 368.800L583.800 377L544.200 354.200Z" fill="#3c1f50" opacity=".55"/>
<path d="M529 344L586 380" stroke="#d83a3a" stroke-width="1" opacity=".8"/>
<!-- elbow block -->
<path d="M568.700 263.700L583.300 268.300L591.300 267L639.300 295L632 308L600 300L594 301.700L575.300 336.300L554 332.300L545 336L532.700 320.300Z" fill="#b82846" opacity=".36"/>
<path d="M568.700 263.700L583.300 268.300L554 332.300L532.700 320.300Z" fill="#b02644" opacity=".3"/>
<path d="M591.300 267L639.300 295L632 308L585 280Z" fill="#b02644" opacity=".32"/>
<path d="M583.300 296.300L594 301.700L575.300 336.300L566 329.700Z" fill="#c83048" opacity=".35"/>
<!-- lower arm to base -->
<path d="M593 354L603.300 380L625.600 446.700L647.800 486.700L667.800 540L700 540L711 470L694.400 464.400L674.400 448.900L658.900 420L645.600 380L637 350Z" fill="#bc2a4a" opacity=".56"/>
<path d="M620.500 430.300L659 418.300L674.400 448.600L634.600 461.500Z" fill="#dc4a3c" opacity=".4"/>
<!-- shoulder -->
<circle cx="636" cy="327.500" r="21" fill="#a82448" opacity=".5"/>
<path d="M645 325.800L649 328L639.600 342.900L635 339.800Z" fill="#d83844" opacity=".8"/>
<circle cx="613.500" cy="323.500" r="24" fill="#b82a3c" opacity=".8"/>
<path d="M592 332L637 336L637 350L594 358Z" fill="#c42c3e" opacity=".6"/><path d="M596 338L618 352L608 358L597 357Z" fill="#d83a3c" opacity=".5"/>
<circle cx="622" cy="326" r="15" fill="none" stroke="#e04a4a" stroke-width="1" opacity=".5"/>
<!-- wrist mess on the bed -->
<path d="M450.500 459.500L462 467L482 461L503 468L507 490L500.300 500L486.300 498.400L466 490.700L450.500 484Z" fill="#e04444" opacity=".4"/><path d="M452 482L466 488L480 486L492 494L500 499L486 498.500L466 491Z" fill="#e84c44" opacity=".45"/>
<!-- base joint -->
<path d="M655 500Q655 470 690 462L711 460L711 575L682 565Q664 545 655 515Z" fill="#7c2a5c" opacity=".9"/>
<path d="M663 502Q663 480 692 472L711 470L711 566L687 557Q670 540 663 516Z" fill="#4f2466" opacity=".92"/>
<path d="M675.600 484.400L699 480L699 512L675.600 515.600Z" fill="#733674" opacity=".95"/>
<path d="M675.600 515.600L699 512L711 518L711 526L690 528Z" fill="#ae2e50" opacity=".9"/>
<path d="M699 480L711 477L711 518L699 512Z" fill="#8c2a58" opacity=".9"/>
<!-- column -->
<path d="M678.300 560L711 560L711 688.300L678.300 688.300Z" fill="#b42a46" opacity=".92"/>
<path d="M700 560L711 560L711 688.300L700 688.300Z" fill="#7a2860" opacity=".8"/>
<path d="M671.700 578Q690 570 711 573L711 592Q690 596 671.700 588Z" fill="#b83048" opacity=".85"/>
<path d="M665 622L711 618L711 637L665 634Z" fill="#c43444" opacity=".85"/>
<path d="M680 593h20v27h-20z" fill="#cc3040" opacity=".6"/>
</g>
<!-- dies drawn over robot -->
<path d="M483.700 425.500L491.700 423.300L491.700 436.500L483.700 438.500Z" fill="#5ccaa0"/>
<path d="M483.700 437.500L491.700 435.500L492.500 437L492.500 446L483 449L483 438Z" fill="#96aa84"/>
<path d="M523.300 412.500L530 410.800L530 424L523.300 425.500Z" fill="#c4a48c"/>
<path d="M523.300 425L530 423.500L531 424.500L531 434.500L522.500 437L522.500 425.500Z" fill="#8cb494"/>
<!-- orange disc -->
<ellipse cx="442" cy="475.500" rx="9.300" ry="17.500" fill="#c4521f" opacity=".7"/>
<ellipse cx="443.500" cy="476" rx="5" ry="12.500" fill="#a87424" opacity=".5"/>
<ellipse cx="443" cy="476" rx="11.500" ry="20" fill="none" stroke="#d84a3a" stroke-width="1.500" opacity=".4"/>
<!-- vertical dotted + cyan arrow -->
<path d="M442.800 497.500L442.800 562" stroke="#ecece8" stroke-width="1.100" stroke-dasharray="1.300 1.500"/>
<path d="M436.400 562.500Q442.700 559.500 449 562.500L442.600 588Z" fill="#4fc0d6"/>
<path d="M436.400 562.500Q439.500 561 442.700 561L442.600 588Z" fill="#7adbe6"/>
<!--/SCENE-->
</svg>
</div>

<!--RIGHTPANEL-->
<style>
#rp{left:717.800px;top:95.200px;width:182.200px;height:593.500px;background:#dfe4e4;}
#rpl{left:716px;top:95.200px;width:1.800px;height:593.500px;background:linear-gradient(90deg,#6a6a6a,#3a3a3a);}
.rt{-webkit-text-stroke:.2px currentColor;position:absolute;font-size:8.400px;line-height:10px;white-space:nowrap;color:#111;}
.gb{position:absolute;border:1px solid #a9adad;box-shadow:inset 1px 1px 0 #f6f8f8, 1px 1px 0 #f6f8f8;box-sizing:border-box;}
.gbl{-webkit-text-stroke:.2px #111;position:absolute;font-size:8.400px;line-height:10px;white-space:nowrap;background:#dfe4e4;padding:0 1.500px;color:#111;}
.btnw{position:absolute;background:#fcfcfc;box-sizing:border-box;border:1px solid #f8f8f8;box-shadow:1px 1px 0 #b4b8b8, 1.800px 1.800px 0 #cfd3d3;}
.cmb{position:absolute;box-sizing:border-box;border:1px solid #7e8284;border-right-color:#f4f4f4;border-bottom-color:#f4f4f4;box-shadow:inset 1px 1px 0 #484a4c;}
.cbt{position:absolute;background:#d6d3cc;box-sizing:border-box;border:1px solid #f6f6f4;border-right-color:#5a5a5a;border-bottom-color:#5a5a5a;}
.cbt:after{content:"";position:absolute;left:50%;top:50%;margin:-1.200px 0 0 -2.300px;border:2.300px solid transparent;border-top:2.600px solid #111;border-bottom:0;}
.wb{position:absolute;box-sizing:border-box;background:#d8d5ce;border:1px solid #f4f4f2;border-right-color:#55575a;border-bottom-color:#55575a;box-shadow:inset -1px -1px 0 #9c9c98;font-size:8.400px;text-align:center;white-space:nowrap;}
</style>
<div id="rp" class="abs"></div><div id="rpl" class="abs"></div>
<div class="rt" style="left:722px;top:102px">段取No.</div>
<div class="rt" style="left:722px;top:114.500px">曲げ速度</div>
<div class="cmb" style="left:803.300px;top:99.600px;width:35.600px;height:12.400px;background:#d6d3cc"></div>
<div class="rt" style="left:806px;top:100.800px;color:#9a9a96">#1</div>
<div class="cbt dis" style="left:827.500px;top:101.200px;width:10px;height:9.400px;"></div>
<div class="cmb" style="left:803.300px;top:114.100px;width:35.600px;height:12.600px;background:#fff"></div>
<div class="rt" style="left:806px;top:115.600px;">3</div>
<div class="cbt" style="left:827.500px;top:115.700px;width:10px;height:9.600px;"></div>
<style>.cbt.dis:after{border-top-color:#8a8a86}</style>

<div class="gb" style="left:722.300px;top:131.700px;width:81px;height:68px"></div>
<div class="gbl" style="left:725.500px;top:126.800px">動作</div>
<div class="btnw" style="left:726.100px;top:139.800px;width:35.800px;height:26px"></div>
<div class="btnw" style="left:726.100px;top:169.900px;width:35.800px;height:26px"></div>
<div class="rt" style="left:768px;top:147.500px">曲げ</div>
<div class="rt" style="left:768px;top:177px">戻す</div>
<!-- bend picture -->
<svg class="abs" style="left:731.500px;top:143.100px" width="26" height="20" viewBox="0 0 26 20">
<rect width="26" height="20" fill="#9cc4ea"/>
<path d="M5.600 0h6.400v4.500l-1.300 3h-3.600l-1.500-3z" fill="#f08030"/><path d="M8 2.500h1.800v2.500H8z" fill="#f8f0e8"/><path d="M8 5h2.200l-.6 6.500-2.100 .5z" fill="#111"/>
<path d="M3.500 11.500L8.300 15L20.500 4" stroke="#6a6a6a" stroke-width="1" fill="none"/><path d="M9 14.500L19 6.500" stroke="#e07070" stroke-width=".8"/><path d="M7 14h2.600v7H7z" fill="#111"/>
<path d="M16 13.500L25.500 4.500L25.800 14L20 17.500z" fill="#e8281c"/>
</svg>
<svg class="abs" style="left:731.500px;top:172.400px" width="26" height="20.500" viewBox="0 0 26 20.500">
<rect width="26" height="20.500" fill="#9cc4ea"/>
<path d="M5.600 0h6.400v4.500l-1.300 3h-3.600l-1.500-3z" fill="#f08030"/><path d="M8 2.500h1.800v2.500H8z" fill="#f8f0e8"/><path d="M8 5h2.200l-.6 6.500-2.100 .5z" fill="#111"/>
<path d="M1 15.500h24.500" stroke="#7a7a7a" stroke-width="1.300"/><path d="M7 16h2.600v4.500H7z" fill="#111"/>
<path d="M15.500 16.500h9l-1.500 2.500h-6z" fill="#e8a0b0"/><path d="M16 19h9v1.500h-9z" fill="#e8201c"/>
</svg>
<!-- switches -->
<svg class="abs" style="left:808.300px;top:131.700px" width="25.600" height="31.200" viewBox="0 0 25.600 31.200" font-family="Liberation Sans,sans-serif">
<rect width="25.600" height="31.200" fill="#2c2e2c"/><rect x="2.400" y="2.400" width="20.800" height="14.500" fill="#5a5c5a"/>
<path d="M3 4.200h19.600M3 7h19.600M3 9.800h19.600M3 12.600h19.600M3 15.200h19.600" stroke="#d4d6d4" stroke-width="1.300"/>
<rect x="2.600" y="18.300" width="20.400" height="10.600" fill="#52ac42"/>
<text x="12.800" y="27.300" font-size="9.600" font-weight="bold" text-anchor="middle" fill="#0c140c" textLength="17" lengthAdjust="spacingAndGlyphs">ON</text>
</svg>
<svg class="abs" style="left:808.300px;top:168.600px" width="25.600" height="31.400" viewBox="0 0 25.600 31.400" font-family="Liberation Sans,sans-serif">
<rect width="25.600" height="31.400" fill="#2c2e2c"/><rect x="2.600" y="2.600" width="20.400" height="11.800" fill="#2f8a4c"/>
<text x="12.800" y="11.800" font-size="9.600" font-weight="bold" text-anchor="middle" fill="#0a140c" textLength="17" lengthAdjust="spacingAndGlyphs">Off</text>
<rect x="2.400" y="15.400" width="20.800" height="13.600" fill="#5a5c5a"/>
<path d="M3 17.200h19.600M3 20h19.600M3 22.800h19.600M3 25.600h19.600M3 28.200h19.600" stroke="#d4d6d4" stroke-width="1.300"/>
</svg>
<div class="rt" style="left:845.500px;top:142px">干渉<span class="hk">ﾁｪｯｸ</span></div>
<div class="rt" style="left:843.900px;top:176px">7軸追従</div>

<div class="gb" style="left:722.300px;top:206.200px;width:128.500px;height:64.500px"></div>
<div class="gbl" style="left:725.500px;top:201.200px">曲げ位置設定</div>
<div class="rt" style="left:745.800px;top:218.300px"><span class="hk">ﾊ<span class="dk">ﾟ</span>ﾝﾁ</span>選択</div>
<div class="btnw" style="left:801.400px;top:211.400px;width:36.400px;height:25.600px"></div>
<svg class="abs" style="left:808.200px;top:214px" width="25.400" height="21" viewBox="0 0 25.400 21">
<rect width="25.400" height="21" fill="#fff"/><rect width="25.400" height="1.300" fill="#1a1a1a"/><rect y="1.300" width="25.400" height="2.900" fill="#48a040"/><path d="M1 2.600h5M8 2.600h2M12 2.600h5M19 2.600h5.500" stroke="#d8e0a0" stroke-width="1.300" stroke-dasharray="1.200 .6"/>
<path d="M0 4.200h9v3.200H0z" fill="#5cb458"/><path d="M13 4.200h12.400v3.200H13z" fill="#1c8048"/>
<path d="M0 14.500h25.400v2.700H0z" fill="#1a1a1a"/><path d="M2 15.600h3M14 15.600h3M20 15.600h3" stroke="#a8c8a0" stroke-width="1.200"/><path d="M0 17.200h25.400V21H0z" fill="#e4241c"/>
<path d="M5.600 6.200l1.400-.4 .9 4.600 .9-1 1.200 .3 1-.4 1 .6 1.100 .2 .6 1.500-.2 3.500-1 1.700H7.200L4 12.200l1-.9 1.400 1z" fill="#fff" stroke="#111" stroke-width=".8" stroke-linejoin="round"/><path d="M8.800 9.800v2.400M10.700 9.900v2.300M12.500 10.400v2" stroke="#111" stroke-width=".6"/>
</svg>
<div class="btnw" style="left:738.900px;top:240px;width:22.600px;height:20px"></div>
<div class="btnw" style="left:774.400px;top:240px;width:22.600px;height:20px"></div>
<div class="btnw" style="left:809.800px;top:240px;width:22.600px;height:20px"></div>
<svg class="abs" style="left:738.900px;top:240px" width="94" height="20" viewBox="0 0 94 20">
<g id="ttt"><path d="M4.500 4.400h14.200v3.300H4.500z" fill="#111"/><path d="M6.200 7v4M11.600 7v4M17 7v4" stroke="#111" stroke-width="1.600"/></g>
<path d="M6 12v5.500M4 14.200l2-2.600 2 2.600z" stroke="#111" stroke-width=".9" fill="#111"/>
<use href="#ttt" x="35.500"/><path d="M47.200 12v5.500M45.200 14.200l2-2.600 2 2.600z" stroke="#111" stroke-width=".9" fill="#111"/>
<use href="#ttt" x="71"/><path d="M88.500 12v5.500M86.500 14.200l2-2.600 2 2.600z" stroke="#111" stroke-width=".9" fill="#111"/>
</svg>
<div class="rt" style="left:751.500px;top:261px">左</div>
<div class="rt" style="left:780px;top:261px">中央</div>
<div class="rt" style="left:821px;top:261px">右</div>

<div class="gb" style="left:722.300px;top:280.400px;width:101.400px;height:48px"></div>
<div class="gbl" style="left:726.500px;top:275.300px">曲げ位置調整 <span style="font-size:10.500px;line-height:8px">×</span></div>
<div class="rt" style="left:730.600px;top:291.500px">左</div>
<div class="rt" style="left:795.800px;top:291.500px">右</div>
<div class="wb" style="left:749.400px;top:288px;width:21.600px;height:14.200px"></div>
<div class="wb" style="left:771.600px;top:288px;width:21.600px;height:14.200px"></div>
<svg class="abs" style="left:749.400px;top:288px" width="44" height="14" viewBox="0 0 44 14"><path d="M8.500 7L12 4v6zM34 7l-3.500-3v6z" fill="#111"/></svg>
<div class="rt" style="left:727.800px;top:312.300px">距離</div>
<div class="cmb" style="left:754.200px;top:311.100px;width:54.200px;height:13.200px;background:#fff"></div>
<div class="cbt" style="left:755.600px;top:312.600px;width:10.800px;height:10.200px;"></div>
<div class="rt" style="left:790px;top:312.800px;width:15px;text-align:right">1</div>

<div class="wb" style="left:744.400px;top:332.500px;width:36.400px;height:23.800px;background:#d4d2cc;border-right-color:#8a8a86;border-bottom-color:#8a8a86;box-shadow:none"></div>
<svg class="abs" style="left:749px;top:335px" width="28" height="19" viewBox="0 0 28 19">
<path d="M1 15.500h22M1 17.500h22" stroke="#8e8e8a" stroke-width="1.200"/><path d="M9 15l2.500-6 3.500-6 4.500-2 .5 2.500 3 1 1 7-2.500-.5-2-5-2.500-1.500-3 6 .5 4.500z" fill="#c4c4be" stroke="#9a9a96" stroke-width=".7"/><path d="M19 3l3.500 1 1.200 7.500-3-1z" fill="#a4a4a0"/><path d="M10.500 9.500l2.500 1v4.500h-3.500z" fill="#f0f0ec" stroke="#9a9a96" stroke-width=".5"/>
</svg>
<div class="rt" style="left:813.900px;top:338.600px;color:#8e9292">掴み換え台</div>

<div class="btnw" style="left:744.400px;top:359.400px;width:36.200px;height:24.600px"></div>
<svg class="abs" style="left:749.400px;top:361.700px" width="25" height="21" viewBox="0 0 25 21">
<rect width="25" height="21" fill="#9cc4ea"/>
<g fill="#2050c8"><path d="M12.500 1l2 2.600h-4zM12.500 20l2-2.600h-4zM1.500 10.500l2.600-2v4zM23.500 10.500l-2.600-2v4z"/></g>
<g stroke="#2050c8" stroke-width=".9"><path d="M12.500 3.500v2.500M12.500 15v2.500M4 10.500h2.500M18.500 10.500h2.500"/></g>
<g fill="#e06838"><circle cx="8" cy="6.500" r="2"/><circle cx="17" cy="6.500" r="2"/><circle cx="8" cy="14.500" r="2"/><circle cx="17" cy="14.500" r="2"/><rect x="8" y="7" width="9" height="7" fill="none" stroke="#e06838" stroke-width="1.600"/></g>
<rect x="10.800" y="9" width="3.400" height="3" fill="#e8e0d8" stroke="#8a5030" stroke-width=".6"/>
</svg>
<div class="rt" style="left:788.300px;top:363.600px">把持位置変更（前工程）</div>

<div class="btnw" style="left:744.400px;top:385.400px;width:36.200px;height:24.600px"></div>
<svg class="abs" style="left:749.400px;top:387.700px" width="25" height="21" viewBox="0 0 25 21">
<rect width="25" height="21" fill="#9cc4ea"/>
<path d="M7 1.500h13l2.500 2.500v2.500H7z" fill="#e8202c"/><path d="M2.500 4h5v14h-5z" fill="#111"/><path d="M7 6.500h15.500v3.500H7z" fill="#111"/><path d="M8 10h13.500v1.600H8z" fill="#e8e8e8"/><path d="M9 10.300h2M13 10.300h2M17 10.300h2" stroke="#e02020" stroke-width=".8"/>
<path d="M2.500 12h20v2.500h-3l-1.500 2v2.500h-15.500z" fill="#111"/><path d="M9 15.500h8v3H9z" fill="#9cc4ea"/>
</svg>
<div class="rt" style="left:806.100px;top:393.600px">金型<span class="hk">ﾚｲｱｳﾄ</span></div>

<div class="btnw" style="left:744.400px;top:411.700px;width:36.200px;height:24.800px"></div>
<svg class="abs" style="left:749.400px;top:414px" width="25" height="21" viewBox="0 0 25 21">
<rect width="25" height="21" fill="#9cc4ea"/>
<path d="M7.500 0h4.500l-.6 4.500-1.700 3.500-1.500-3.500z" fill="#f08030"/><path d="M9 3l1.600 .4-.5 6.600-1.300 .4z" fill="#111"/>
<path d="M1 14.500h12" stroke="#666" stroke-width="1.300"/><path d="M8.800 14.500h1.700v4H8.800z" fill="#111"/><path d="M6 18.500h7.500v2H6z" fill="#e8201c"/>
<path d="M14 15.500h9.500v1.600H14z" fill="#e06868"/>
<g fill="#2050c8"><path d="M13 10l2.600-2v4zM24 10l-2.600-2v4z"/><path d="M15.500 9.500h2v1h-2zM19.500 9.500h2v1h-2z"/></g>
</svg>
<div class="rt" style="left:791.700px;top:417.200px"><span class="hk">ﾋ<span class="dk">ﾟ</span>ﾝﾁﾝｸ<span class="dk">ﾞ</span>ﾎ<span class="dk">ﾟ</span>ｲﾝﾄ</span>掴み換え</div>

<div class="wb" style="left:756.300px;top:532.500px;width:60.600px;height:13.400px;line-height:11px;color:#9a9a96;border-right-color:#a0a09c;border-bottom-color:#a0a09c;box-shadow:none">&lt; 戻る</div>
<div class="abs" style="left:817.200px;top:532px;width:63px;height:14.200px;background:#1a1a1a"></div>
<div class="wb" style="left:818.200px;top:533px;width:61px;height:12.200px;line-height:10px;color:#111">次へ &gt;</div>

<!--TASKBAR-->
<style>
#tb{left:0;top:688.300px;width:900px;height:31.700px;background:#d3d0c8;border-top:1.200px solid #f0eee8;box-sizing:border-box;}
.tbb{position:absolute;box-sizing:border-box;border:1px solid #f8f6f0;border-right-color:#55534e;border-bottom-color:#55534e;box-shadow:inset -1px -1px 0 #98958d;background:#d3d0c8;}
.tsep{position:absolute;width:1px;background:#8e8b84;box-shadow:1px 0 0 #f4f2ec;}
.tt{position:absolute;font-size:8.400px;white-space:nowrap;color:#111;}
</style>
<div id="tb" class="abs"></div>
<div class="tbb" style="left:3px;top:691px;width:41.600px;height:25.600px"></div>
<svg class="abs" style="left:5.500px;top:698px" width="12" height="11" viewBox="0 0 12 11"><path d="M1 2.500Q3 1 5 2.200L4.200 5.600Q2.400 4.600 .3 5.800z" fill="#e4502c"/><path d="M5.800 2.400Q8 3.200 10.500 1.800L9.600 5.200Q7.400 6.600 5 5.800z" fill="#5cb040"/><path d="M.1 6.600Q2.200 5.400 4 6.400L3.200 9.800Q1.400 8.800-.6 10z" fill="#3a78d8"/><path d="M4.800 6.600Q7 7.600 9.400 6L8.600 9.400Q6.400 10.800 4 10z" fill="#f0c020"/></svg>
<div class="tt" style="left:15.800px;top:698px;font-weight:bold;font-size:8.800px;line-height:11px;letter-spacing:-0.800px;">スタート</div>
<!-- IE -->
<svg class="abs" style="left:56px;top:692px" width="25" height="25" viewBox="0 0 25 25">
<defs><radialGradient id="ieg" cx="40%" cy="35%" r="70%"><stop offset="0" stop-color="#7cc4f4"/><stop offset="1" stop-color="#1c68c0"/></radialGradient></defs>
<circle cx="12.500" cy="13" r="8.600" fill="url(#ieg)"/><path d="M7.500 13.500h10.500c0-7-9-7.500-10.500 0c.5 6 8 6.500 10 1.500h-3c-1 2-4 1.500-4-1z M10.800 11.500c.5-2 3.500-2 4 0z" fill="#fff" fill-rule="evenodd"/>
<path d="M3 20C-1 14 12 1 22 3.500C17 3 6 12 5.500 19z" fill="#f0c030" opacity=".95"/><path d="M22 3.500c2 1 1.500 4-.5 6.500c1-3 .5-4.500-1.500-5z" fill="#f0c030"/>
</svg>
<!-- folder -->
<svg class="abs" style="left:91.500px;top:693.500px" width="25" height="23" viewBox="0 0 25 23">
<path d="M1.500 3.500h8l1.500 1.800h12.500v15.500h-22z" fill="#f0d88c" stroke="#c8a850" stroke-width=".8"/><path d="M3 4.500h5M11.500 4.300h3" stroke="#58a848" stroke-width="1.200"/><path d="M16 4.300h3" stroke="#d84030" stroke-width="1.200"/>
<path d="M1.500 9h22v12h-22z" fill="#f4e4a4"/><path d="M5 11.500h15v9.500h-15z" fill="#7cb8e4" stroke="#4c88c0" stroke-width=".7"/><path d="M7 15h11v4H7z" fill="#b8dcf4"/><path d="M9.500 18.500h6v2.500h-6z" fill="#f4f4f4"/>
</svg>
<!-- media player -->
<svg class="abs" style="left:127px;top:694.500px" width="22" height="21" viewBox="0 0 22 21">
<path d="M1.500 1.500h16l3.500 2v15.500h-19.500z" fill="#68b4e4" stroke="#3888c8" stroke-width=".8"/><path d="M17.500 1.500l3.500 2v15.500l-3.500-1.500z" fill="#3c8ccc"/>
<circle cx="10" cy="10.500" r="6.400" fill="#f08020" stroke="#f8e0b0" stroke-width="1.200"/><path d="M8 7l5.500 3.500L8 14z" fill="#fff"/>
</svg>
<!-- cat -->
<svg class="abs" style="left:162px;top:694px" width="23" height="22" viewBox="0 0 23 22">
<rect width="23" height="22" fill="#1c1c1c"/><path d="M1 1h9l2 4-2 6 3 10H1z" fill="#d8d8d8"/><path d="M1 1h5l-2 9 3 11H1z" fill="#f4f4f4"/><path d="M9 2l4 1 1 5-3 2z" fill="#a8a8a8"/><path d="M12 13l4-2 5 3 1 7H13z" fill="#b0b0b0"/>
<ellipse cx="16.500" cy="6.500" rx="3" ry="2.300" fill="#b0c828"/><circle cx="16.500" cy="6.500" r="1.100" fill="#1c1c1c"/><circle cx="13" cy="8.500" r="1" fill="#f8f8f8"/>
</svg>
<!-- active red app -->
<div class="abs" style="left:193px;top:692px;width:33px;height:26.500px;background:#f4f2ee"></div>
<div class="abs" style="left:194px;top:692.800px;width:31.200px;height:25.200px;background:#1b2a62"></div>
<svg class="abs" style="left:197px;top:693.500px" width="26" height="24" viewBox="0 0 26 24">
<path d="M4 23V12Q4 3.500 12.500 3.500Q21 3.500 21 12V23H16.500V20Q14.500 22 12 22Q9 22 8 20V23Z M8.500 12.500Q8.500 17 12.500 17Q16.500 17 16.500 12.500Q16.500 8 12.500 8Q8.500 8 8.500 12.500Z" fill="#e41c24" fill-rule="evenodd"/>
<ellipse cx="18" cy="7.500" rx="5.500" ry="2.600" transform="rotate(-42 18 7.500)" fill="none" stroke="#f0e030" stroke-width="1.700"/><path d="M20.500 3.500l3-2-1 3.500z" fill="#f0e030"/><circle cx="17.600" cy="8" r="1.300" fill="#f8f8f8"/>
</svg>
<!-- pdf -->
<div class="tbb" style="left:228px;top:691px;width:32.400px;height:27.500px"></div>
<svg class="abs" style="left:235px;top:696px" width="20" height="19.500" viewBox="0 0 20 19.500">
<defs><linearGradient id="pdg" x1="0" y1="0" x2="0" y2="1"><stop offset="0" stop-color="#e4383c"/><stop offset="1" stop-color="#a81418"/></linearGradient></defs>
<rect width="20" height="19.500" fill="url(#pdg)"/><path d="M4 15.500C7 13 9.500 8 9.600 4.200C9.700 2.800 11.200 3 11 4.600C10.600 8 13 12 16.500 12.600C18 13 17 14.200 15.600 13.800C11.500 12.600 7 13.500 4 15.500Z" fill="none" stroke="#fff" stroke-width="1.100"/>
</svg>
<!-- computer -->
<div class="tbb" style="left:262px;top:691px;width:33.400px;height:27.500px"></div>
<svg class="abs" style="left:266.500px;top:694px" width="25" height="22" viewBox="0 0 25 22">
<ellipse cx="12" cy="12.500" rx="11.500" ry="6" transform="rotate(-22 12 12.500)" fill="none" stroke="#98a834" stroke-width="2.200"/>
<rect x="6.500" y="4" width="10" height="9" fill="#e8e8e4" stroke="#6a6a68" stroke-width=".8"/><rect x="8" y="5.500" width="7" height="5.600" fill="#1c48c0"/>
<path d="M6 14.500h11v2H6z" fill="#c8c8c4" stroke="#6a6a68" stroke-width=".6"/><rect x="17.500" y="3" width="5" height="11" fill="#e0e0dc" stroke="#6a6a68" stroke-width=".8"/><path d="M18.500 5h3M18.500 7h3" stroke="#6a6a68" stroke-width=".6"/>
</svg>
<!-- robot 3 -->
<div class="tbb" style="left:297.400px;top:691px;width:34px;height:27.500px"></div>
<svg class="abs" style="left:303px;top:694px" width="25" height="22" viewBox="0 0 25 22">
<path d="M7 3Q12 0 16 3L17 7L14.500 9.500L17 12.500L15.500 16.500L9 18L6 15.500L10.500 13.500L11 11L8.500 10L11.500 7L10 5Z" fill="#e42830"/><path d="M9.500 4.500l4-.5-1 3 2 3-3 1z" fill="#f4a8a8" opacity=".7"/>
<ellipse cx="12.500" cy="14.500" rx="10" ry="3.600" fill="none" stroke="#d8b828" stroke-width="1.300" transform="rotate(-8 12.500 14.500)"/><path d="M8 17l9.500-1.500 2 3-10 1.500z" fill="#282828"/><path d="M18 8l3 1.500-1.500 3z" fill="#38a860" opacity=".85"/>
</svg>
<!-- language bar -->
<svg class="abs" style="left:484px;top:696px" width="16" height="16" viewBox="0 0 16 16"><circle cx="6.200" cy="6.500" r="4.800" fill="#e02828"/><circle cx="4.800" cy="5" r="1.500" fill="#f8a0a0"/><path d="M9.500 3h3v7.500Q11 13 7.500 12.500l4-2.500z" fill="#3c3c3c"/></svg>
<div class="tt" style="left:505.500px;top:697.500px;font-size:11px;line-height:13px;font-weight:bold;transform:scaleX(.78);transform-origin:0 0">A</div>
<div class="tt" style="left:516px;top:697.800px;font-size:11px;line-height:13px;">般</div>
<svg class="abs" style="left:530px;top:697px" width="15" height="14" viewBox="0 0 15 14"><path d="M1 5.500Q7 8 14 5L12.500 11.500Q7 13.500 2.500 11.500z" fill="#f0c050" stroke="#c08828" stroke-width=".6"/><path d="M3 2.500l3 3.500M6 1.500l1 4.500" stroke="#d84030" stroke-width="1.500"/><circle cx="9.800" cy="3.800" r="2.600" fill="#3c88e0"/></svg>
<svg class="abs" style="left:546px;top:697.500px" width="15" height="13" viewBox="0 0 15 13"><path d="M1 6l6-4 7 2.500-6 4.500z" fill="#f4d070" stroke="#c09030" stroke-width=".6"/><path d="M1 6v3.500l7 3V9zM8 9l6-4.500V8l-6 4.500z" fill="#e8b048" stroke="#c09030" stroke-width=".6"/><path d="M5 3.500l6 2.500" stroke="#e8e4d8" stroke-width="1.500"/></svg>
<div class="tsep" style="left:561px;top:695px;height:19px"></div>
<svg class="abs" style="left:565.500px;top:698.500px" width="12" height="12" viewBox="0 0 12 12" font-family="Liberation Sans,sans-serif"><circle cx="6" cy="6" r="5.600" fill="#2a4cb4" stroke="#8aa4e0" stroke-width=".7"/><text x="6" y="9" font-size="8" font-weight="bold" fill="#fff" text-anchor="middle">?</text></svg>
<div class="tsep" style="left:580.500px;top:695px;height:19px"></div>
<div class="tt" style="left:583.500px;top:696.300px;font-size:5.200px;line-height:6px;font-weight:bold;color:#222;letter-spacing:.1px">CAPS</div>
<div class="tt" style="left:583.500px;top:704px;font-size:5.200px;line-height:6px;font-weight:bold;color:#222;letter-spacing:.1px">KANA</div>
<svg class="abs" style="left:600.500px;top:696px" width="8" height="16" viewBox="0 0 8 16"><rect x="2.500" y="1" width="4.500" height="3" fill="none" stroke="#222" stroke-width=".8"/><rect x="1" y="2.600" width="4.500" height="3" fill="#d3d0c8" stroke="#222" stroke-width=".8"/><path d="M1.500 10h5l-2.500 3z" fill="#222"/></svg>
<!-- tray -->
<div class="abs" style="left:610px;top:691.500px;width:288px;height:27px;box-sizing:border-box;border:1px solid #8e8b84;border-right-color:#f6f4ee;border-bottom-color:#f6f4ee"></div>
<svg class="abs" style="left:612px;top:693px" width="284" height="24" viewBox="612 693 284 24" font-family="Liberation Sans,sans-serif">
<rect x="616" y="698.500" width="11.500" height="11" fill="#f4f4f2" stroke="#c4c2bc" stroke-width=".8"/><path d="M621.500 699v10" stroke="#d8d8d4" stroke-width=".8"/>
<rect x="631.500" y="697.500" width="12.500" height="12.500" rx="2" fill="#e8a838"/><circle cx="637" cy="702.500" r="3.300" fill="#f4dca0" stroke="#a06c20" stroke-width=".7"/><rect x="638.500" y="704.500" width="5.500" height="5.500" fill="#d82828"/><path d="M639.800 705.800l3 3m0-3l-3 3" stroke="#fff" stroke-width="1"/>
<rect x="650.500" y="697" width="7" height="12.500" rx="1.200" fill="#222"/><path d="M648 699h2.500v2.500zM660 699h-2.500v2.500zM648 704h2.500v2zM660 704h-2.500v2z" fill="#222"/><circle cx="654" cy="699.800" r="1.500" fill="#e02828"/><circle cx="654" cy="703.300" r="1.500" fill="#e0a020"/><circle cx="654" cy="706.800" r="1.500" fill="#40c040"/>
<path d="M665.500 702h2.500l3-3v10l-3-3h-2.500z" fill="#c8c8c4" stroke="#7a7a78" stroke-width=".6"/><circle cx="673.500" cy="706.500" r="3.200" fill="#fff" stroke="#d82828" stroke-width="1.100"/><path d="M671.300 704.300l4.400 4.400" stroke="#d82828" stroke-width="1"/>
<path d="M682.500 702h2.500l3.500-3.500v11l-3.500-3.500h-2.500z" fill="#d85040" stroke="#a03020" stroke-width=".6"/><path d="M690.500 700.500q2 3.500 0 7M692.500 699q3 5 0 10" stroke="#d85040" stroke-width=".9" fill="none"/>
<rect x="698.500" y="697.500" width="13" height="13" rx="1" fill="#2a7cd0"/><rect x="700" y="699" width="10" height="10" fill="#f0f4f8"/><path d="M701.500 700.500l7 7M701.500 700.500l3 .5M708.500 707.500l-.5-3" stroke="#1a4ca0" stroke-width="1.500"/>
<path d="M716.500 698v12.500" stroke="#8a8a88" stroke-width="1.200"/><path d="M717 698.500h6.500v5H717z" fill="#f4f4f2" stroke="#a8a8a4" stroke-width=".6"/><circle cx="724" cy="707" r="3.400" fill="#d82828"/><path d="M722.500 705.500l3 3m0-3l-3 3" stroke="#fff" stroke-width="1"/>
<circle cx="736.500" cy="701.500" r="3" fill="#e8e8e4" stroke="#7a7a78" stroke-width=".8"/><rect x="738" y="700.500" width="6.500" height="8" fill="#c8c8c4" stroke="#8a8a88" stroke-width=".6"/><rect x="737.500" y="705" width="5.500" height="5" fill="#e8c828" stroke="#a08818" stroke-width=".6"/>
<path d="M751.500 698h4v4h-4z" fill="#e4e4e0" stroke="#8a8a88" stroke-width=".6"/><path d="M750.500 702h6v5.500q-3 2.500-6 0z" fill="#6a6a70"/><circle cx="758.500" cy="707" r="3.600" fill="#38a838"/><path d="M756.600 707l1.500 1.600 2.600-3" stroke="#fff" stroke-width="1.100" fill="none"/>
<path d="M766 704.500h8M772 704.500v2.500M774.500 704.500v2" stroke="#d8b020" stroke-width="1.600"/><circle cx="768" cy="704.500" r="2.600" fill="#e8c828" stroke="#a88810" stroke-width=".6"/><path d="M775 703l3.500 1.500-3.500 1.500z" fill="#d8b020"/>
<path d="M789.500 697.500l4.500 4h-2.500v2.500h-4v-2.500H785z" fill="#1c6c3c"/><path d="M789.500 711.500l-4.500-4h2.500V705h4v2.500h2.500z" fill="#38a858"/><path d="M792 699l2 5-1 5" stroke="#222" stroke-width=".8" fill="none"/>
<rect x="801" y="699" width="8" height="9.500" fill="#f0f0ec" stroke="#7a7a78" stroke-width=".6"/><path d="M802.500 701.500h5M802.500 703.500h5M802.500 705.500h3" stroke="#555" stroke-width=".6"/><circle cx="809" cy="707" r="3.300" fill="#f4f4f0" stroke="#2c8c3c" stroke-width="1"/><path d="M808 705.200v3.600l2.800-1.800z" fill="#2c8c3c"/><path d="M803 697.500h4v1.500h-4z" fill="#444"/>
<path d="M817 702.500l6-3 6 2.500-6 3.500z" fill="#f0c858"/><path d="M817 702.500v5l6 3.500v-5.500z" fill="#d8a030"/><path d="M823 705.500l6-3.500v5l-6 4z" fill="#c08820"/><path d="M820 701l6 2.500" stroke="#3c7cd0" stroke-width="1.400"/>
<text x="860" y="701.600" font-size="8.400" text-anchor="middle" fill="#111">15:08</text>
<text x="860" y="713.400" font-size="8.400" text-anchor="middle" fill="#111">2015/10/14</text>
<rect x="885" y="699.500" width="12.500" height="9" fill="#3c78c8" stroke="#1c3c80" stroke-width=".7"/><path d="M886 703.500h10.500v4H886z" fill="#78b0e8"/><path d="M888 710.500h6.500" stroke="#444" stroke-width="1"/>
</svg>

</body>
</html>
